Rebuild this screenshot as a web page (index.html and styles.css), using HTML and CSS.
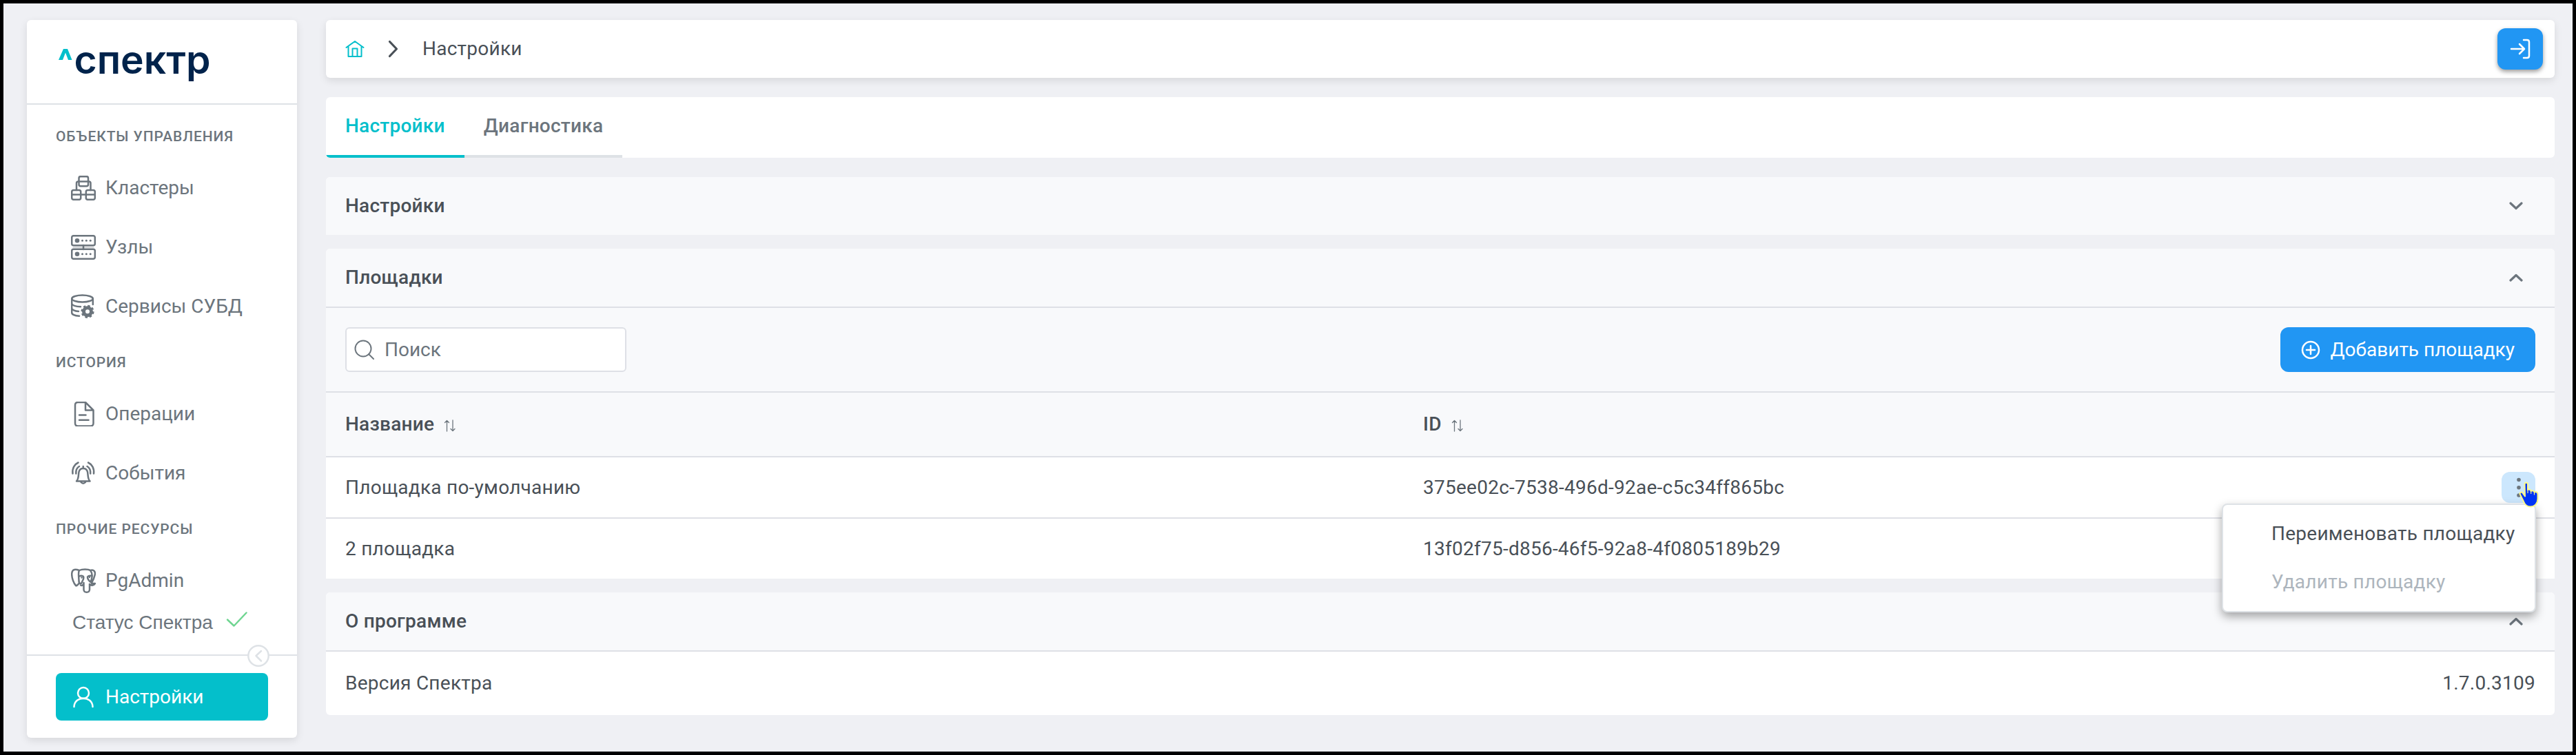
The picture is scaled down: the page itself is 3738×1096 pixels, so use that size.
FILE: index.html
```html
<!DOCTYPE html>
<html lang="ru">
<head>
    <meta charset="UTF-8">
    <meta name="viewport" content="width=device-width, initial-scale=1.0">
    <title>Спектр - Настройки</title>
    <link rel="stylesheet" href="styles.css">
</head>
<body>
    <div class="sidebar">
        <div class="logo">
            <svg width="240" height="90" viewBox="0 0 240 90">
                <path d="M0 37 L7 21 H13 L19.5 37 H14 L10 26.500 L6 37 Z" fill="#04bfcb"/>
                <text x="22.500" y="57" class="logo-text" textLength="198" lengthAdjust="spacingAndGlyphs">спектр</text>
            </svg>
        </div>
        <div class="menu">
            <div class="menu-title">Объекты управления</div>
            <a class="menu-item">
                <svg class="icon" viewBox="0 0 36 36">
                    <rect x="11.500" y="1.200" width="13.500" height="14" rx="2.500"/>
                    <rect x="1.200" y="21" width="13" height="13.800" rx="2.500"/>
                    <rect x="21.800" y="21" width="13" height="13.800" rx="2.500"/>
                    <path d="M11.500 8.500H25M1.200 27.500H34.800M8 21V11Q8 8.500 10.500 8.500H11.500M25 8.500H26Q28.500 8.500 28.500 11V21"/>
                </svg>
                <span>Кластеры</span>
            </a>
            <a class="menu-item">
                <svg class="icon" viewBox="0 0 36 36">
                    <rect x="1.200" y="1.200" width="33.600" height="14" rx="2.500"/>
                    <rect x="1.200" y="20.800" width="33.600" height="14" rx="2.500"/>
                    <path d="M3 18H33" stroke-width="1" opacity="0.5"/>
                    <path d="M18 15V21"/>
                    <g class="fill">
                        <circle cx="9" cy="8.200" r="3.300"/><circle cx="16.500" cy="8.200" r="1.500"/><circle cx="22.300" cy="8.200" r="1.500"/><circle cx="28.200" cy="8.200" r="1.500"/>
                        <circle cx="9" cy="27.800" r="3.300"/><circle cx="16.500" cy="27.800" r="1.500"/><circle cx="22.300" cy="27.800" r="1.500"/><circle cx="28.200" cy="27.800" r="1.500"/>
                    </g>
                </svg>
                <span>Узлы</span>
            </a>
            <a class="menu-item">
                <svg class="icon" viewBox="0 0 36 36">
                    <ellipse cx="16.500" cy="6.500" rx="15.300" ry="5"/>
                    <path d="M1.200 6.500V27C1.200 29.500 6 31.300 12 31.700M31.800 6.500V15M1.200 14C2.500 16.500 8 18 14 18.300M1.200 21C2 23 6 24.500 11 25"/>
                    <circle cx="24" cy="25.300" r="5.500" stroke-width="5"/>
                    <circle class="teeth" cx="24" cy="25.300" r="8.200"/>
                </svg>
                <span>Сервисы СУБД</span>
            </a>

            <div class="menu-title">История</div>
            <a class="menu-item">
                <svg class="icon" viewBox="0 0 36 36">
                    <path d="M21 1H10Q6 1 6 5V31.500Q6 35.500 10 35.500H28.500Q32.500 35.500 32.500 31.500V12.500L21 1V12.500H32.500M12 19.500H21.500M12 26.700H25.500"/>
                </svg>
                <span>Операции</span>
            </a>
            <a class="menu-item">
                <svg class="icon" viewBox="0 0 36 36">
                    <path d="M8 29.500C11.500 26 10.500 21 11.500 16C12.500 12 15 11 17.700 11C20.500 11 23 12 24 16C25 21 24 26 27.500 29.500ZM17.700 11V8M14.500 31Q17.700 34.500 21 31M10.500 2.500C5 5 1.500 11 2.500 18.500M25 2.500C30.500 5 34 11 33 18.500M12 8C8.500 10 7 13.500 7.300 18.500M23.500 8C27 10 28.500 13.500 28.200 18.500"/>
                </svg>
                <span>События</span>
            </a>

            <div class="menu-title">Прочие ресурсы</div>
            <a class="menu-item">
                <svg class="icon" viewBox="0 0 36 36">
                    <path d="M12 3C7 1 1.500 .5 1.200 8C1 14 4 22 7 25C8 26 9.500 24 12 21.500M12 3C16 1 25 1 28 3C33 1 36 5 34.500 10C33.500 14.500 32 18 30 21M12 3C10 6 11.500 12 11.500 19C12 23 15 23 16 20C17 17 20 14 17.500 11.500C15 10 13 11 11.500 12M28 3C32 8 31 13 28.500 20C26 18 24 15 24 12.500C25 11 28 10.500 30.500 11M18.500 21V31C19 36 26.500 36 27 31V23M14 24.500Q17 26 18.500 22M27 23C30 26 33.500 24.500 35 22H30"/>
                    <g class="fill"><circle cx="15.500" cy="13.500" r="1.200"/><circle cx="27" cy="13" r="1.200"/></g>
                </svg>
                <span>PgAdmin</span>
            </a>
            <div class="status">
                <span>Статус Спектра</span>
                <svg class="check" width="32" height="24" viewBox="0 0 32 24"><path d="M2 12.500L11.500 21.500L29.500 2.500"/></svg>
            </div>
        </div>
        <div class="sidebar-footer">
            <div class="collapse">
                <svg width="32" height="32" viewBox="0 0 32 32"><circle cx="16" cy="16" r="14.700" fill="#fff"/><path d="M20 9L12.500 16L20 23.500"/></svg>
            </div>
            <a class="menu-item active">
                <svg class="icon" viewBox="0 0 36 36">
                    <circle cx="18" cy="12" r="8"/>
                    <path d="M4.500 32C5 15.500 31 15.500 31.500 32"/>
                </svg>
                <span>Настройки</span>
            </a>
        </div>
    </div>

    <div class="main">
        <div class="topbar">
            <svg class="home" width="28" height="26" viewBox="0 0 28 26"><path d="M1.500 11L14 2L26.500 11M4.500 9.500V24H23.500V9.500M10.500 24V12.500H17.500V24"/></svg>
            <svg class="separator" width="16" height="26" viewBox="0 0 16 26"><path d="M2.500 2.500L12.500 13L2.500 23.500"/></svg>
            <span>Настройки</span>
            <button class="login-button">
                <svg width="30" height="30" viewBox="0 0 30 30"><path d="M2 15H20.500M14 8L21 15L14 22M20 2H25Q28 2 28 5V25Q28 28 25 28H20"/></svg>
            </button>
        </div>

        <div class="tabs">
            <div class="tab selected">Настройки</div>
            <div class="tab">Диагностика</div>
        </div>

        <div class="panel">
            <div class="panel-header">
                <span>Настройки</span>
                <svg class="chevron" viewBox="0 0 20 12"><path d="M2 2L10 9.500L18 2"/></svg>
            </div>
        </div>

        <div class="panel">
            <div class="panel-header opened">
                <span>Площадки</span>
                <svg class="chevron" viewBox="0 0 20 12"><path d="M2 10L10 2.500L18 10"/></svg>
            </div>
            <div class="toolbar">
                <div class="search">
                    <svg width="30" height="30" viewBox="0 0 30 30"><circle cx="13" cy="13" r="11.500"/><path d="M21 21L28 28"/></svg>
                    <input type="text" placeholder="Поиск">
                </div>
                <button class="add-button">
                    <svg width="28" height="28" viewBox="0 0 28 28"><circle cx="14" cy="14" r="12"/><path d="M14 8V20M8 14H20"/></svg>
                    <span>Добавить площадку</span>
                </button>
            </div>
            <div class="row row-head">
                <div>Название <svg class="sort" viewBox="0 0 18 18"><path d="M4.500 17V1.500M1.500 4.500L4.500 1.500L7.500 4.500M13 1V16.500M10 13.500L13 16.500L16 13.500"/></svg></div>
                <div>ID <svg class="sort" viewBox="0 0 18 18"><path d="M4.500 17V1.500M1.500 4.500L4.500 1.500L7.500 4.500M13 1V16.500M10 13.500L13 16.500L16 13.500"/></svg></div>
            </div>
            <div class="row">
                <div>Площадка по-умолчанию</div>
                <div>375ee02c-7538-496d-92ae-c5c34ff865bc</div>
                <div class="actions">
                    <button class="dots-button">
                        <svg width="6" height="30" viewBox="0 0 6 30"><circle cx="3" cy="3.500" r="2.800"/><circle cx="3" cy="14.700" r="2.800"/><circle cx="3" cy="26" r="2.800"/></svg>
                    </button>
                    <div class="dropdown">
                        <div class="dropdown-item">Переименовать площадку</div>
                        <div class="dropdown-item disabled">Удалить площадку</div>
                    </div>
                    <!-- курсор -->
                    <svg class="cursor" width="32" height="42" viewBox="0 0 32 42">
                        <path d="M8.500 6C8.500 3 13 3 13 6V14C14.500 13 17.500 13.500 17.500 16C19.500 14.500 22.500 15.500 22.500 17.500C25 16.500 27.500 17.500 27.500 20.500V27C27.500 34 23 38.500 17 38.500C11.500 38.500 8.500 35 7 31L2 21C.5 18 4 16.500 5.500 18.500L9 23.500Z" fill="#0035f5" stroke="#fdf98a" stroke-width="2"/>
                        <path d="M13 14V18.500M17.700 16V19.500M22.500 18V21" stroke="#fdf98a" stroke-width="1.200"/>
                    </svg>
                </div>
            </div>
            <div class="row">
                <div>2 площадка</div>
                <div>13f02f75-d856-46f5-92a8-4f0805189b29</div>
            </div>
        </div>

        <div class="panel last">
            <div class="panel-header opened">
                <span>О программе</span>
                <svg class="chevron" viewBox="0 0 20 12"><path d="M2 10L10 2.500L18 10"/></svg>
            </div>
            <div class="version">
                <span>Версия Спектра</span>
                <span>1.7.0.3109</span>
            </div>
        </div>
    </div>
</body>
</html>
```

FILE: styles.css
```css
* {
    box-sizing: border-box;
}
body {
    font-family: Roboto, sans-serif;
    font-size: 28px;
    line-height: 42px;
    letter-spacing: 0.25px;
    color: #495057;
    background-color: #eff0f4;
    margin: 0;
    height: 100vh;
    border: 5px solid #000;
    padding: 24px 26px 20px 34px;
    display: flex;
    gap: 42px;
    overflow: hidden;
}
svg {
    display: block;
    flex-shrink: 0;
    fill: none;
    stroke: currentColor;
    stroke-width: 2.5;
    stroke-linecap: round;
    stroke-linejoin: round;
}
button {
    border: none;
    font: inherit;
    cursor: pointer;
}

/* Боковое меню */
.sidebar {
    width: 392px;
    flex-shrink: 0;
    background-color: white;
    border-radius: 6px;
    box-shadow: 0 4px 12px rgba(0,0,0,0.1);
    color: #6c757d;
    letter-spacing: 0;
    display: flex;
    flex-direction: column;
}
.logo {
    height: 123px;
    border-bottom: 2px solid #dee2e6;
    padding: 21px 0 0 46px;
}
.logo svg {
    stroke: none;
}
.logo-text {
    font-family: Inter, sans-serif;
    font-size: 56px;
    font-weight: 600;
    fill: #00234b;
}
.menu {
    flex-grow: 1;
    padding: 0 42px;
}
.menu-title {
    font-size: 21px;
    font-weight: 500;
    line-height: 32px;
    letter-spacing: 0.9px;
    text-transform: uppercase;
    padding-top: 30px;
    margin-bottom: 16px;
}
.menu-item + .menu-title {
    padding-top: 22px;
}
.menu-item {
    display: flex;
    align-items: center;
    gap: 14px;
    height: 86px;
    padding-left: 22px;
}
.icon {
    width: 36px;
    height: 36px;
}
.icon .fill {
    fill: currentColor;
    stroke: none;
}
.icon .teeth {
    stroke-width: 2.8;
    stroke-linecap: butt;
    stroke-dasharray: 3.4 3.04;
}
.status {
    display: flex;
    gap: 19px;
    padding-left: 24px;
    margin-top: -3px;
    font-family: "Liberation Sans", sans-serif;
}
.check {
    margin-top: 4px;
    color: #6fd591;
}
.sidebar-footer {
    position: relative;
    height: 121px;
    border-top: 2px solid #dee2e6;
    padding: 25px 42px 0;
}
.collapse {
    position: absolute;
    left: 320px;
    top: -16px;
    color: #dee2e6;
}
.active {
    height: 69px;
    background-color: #04bfcb;
    color: white;
    border-radius: 8px;
}

/* Основная часть */
.main {
    flex-grow: 1;
}
.topbar {
    display: flex;
    align-items: center;
    height: 84px;
    margin-bottom: 28px;
    padding: 0 17px 0 28px;
    background-color: white;
    border-radius: 6px;
    box-shadow: 0 4px 12px rgba(0,0,0,0.1);
}
.home {
    color: #04bfcb;
    stroke-width: 2;
}
.separator {
    margin: 0 34px;
    stroke-width: 3.2;
}
.login-button {
    display: flex;
    align-items: center;
    justify-content: center;
    width: 66px;
    height: 60px;
    margin-left: auto;
    background-color: #2196f3;
    color: white;
    border-radius: 12px;
    box-shadow: 0 3px 6px rgba(0,0,0,0.4);
}
.tabs {
    display: flex;
    height: 88px;
    margin-bottom: 28px;
    background-color: white;
    border-radius: 6px;
    overflow: hidden;
}
.tab {
    padding: 21px 28px 0;
    border-bottom: 4px solid #dee2e6;
    color: #6c757d;
    font-weight: 500;
}
.tab.selected {
    border-color: #04bfcb;
    color: #04bfcb;
}
.panel {
    margin-bottom: 20px;
    background-color: white;
    border-radius: 6px 6px 0 0;
}
.panel.last {
    border-radius: 6px;
}
.panel-header {
    display: flex;
    align-items: center;
    justify-content: space-between;
    height: 84px;
    padding: 0 46px 0 28px;
    background-color: #f8f9fb;
    border-radius: 6px 6px 0 0;
    font-weight: 500;
}
.panel-header.opened {
    height: 86px;
    border-bottom: 2px solid #dee0e6;
}
.chevron {
    width: 20px;
    height: 12px;
    color: #6c757d;
    stroke-width: 3.2;
}
.toolbar {
    display: flex;
    align-items: center;
    justify-content: space-between;
    height: 123px;
    padding: 0 28px;
    background-color: #f8f9fb;
    border-bottom: 2px solid #dee0e6;
}
.search {
    display: flex;
    align-items: center;
    gap: 14px;
    width: 408px;
    height: 65px;
    padding-left: 11px;
    background-color: white;
    border: 2px solid #dee0e6;
    border-radius: 6px;
    color: #6c757d;
}
.search svg {
    stroke-width: 2;
}
.search input {
    width: 300px;
    padding: 0;
    border: none;
    font: inherit;
}
.search input::placeholder {
    color: #6c757d;
}
.add-button {
    display: flex;
    align-items: center;
    gap: 14px;
    height: 65px;
    padding: 0 30px;
    background-color: #2196f3;
    color: white;
    border-radius: 12px;
    letter-spacing: 0;
}
.row {
    display: grid;
    grid-template-columns: 1564px 1fr auto;
    align-items: center;
    height: 89px;
    padding: 0 28px;
    border-bottom: 2px solid #dee0e6;
}
.row:last-child {
    height: 87px;
    border-bottom: none;
}
.row-head {
    height: 94px;
    background-color: #f8f9fb;
    font-weight: 500;
}
.row-head div {
    display: flex;
    align-items: center;
    gap: 14px;
}
.sort {
    width: 18px;
    height: 18px;
    margin-top: 3px;
    color: #6c757d;
    stroke-width: 1.3;
}
.actions {
    position: relative;
}
.dots-button {
    display: flex;
    align-items: center;
    justify-content: center;
    width: 49px;
    height: 45px;
    background-color: #cce7fd;
    border-radius: 12px;
}
.dots-button svg {
    fill: #6c757d;
    stroke: none;
}
.dropdown {
    position: absolute;
    right: -1px;
    top: 46px;
    z-index: 1;
    width: 456px;
    height: 158px;
    padding: 8px 0;
    background-color: white;
    border: 2px solid #dee2e6;
    border-radius: 8px;
    box-shadow: 0 6px 14px rgba(0,0,0,0.35);
}
.dropdown-item {
    height: 70px;
    padding: 13px 0 0 70px;
    white-space: nowrap;
}
.dropdown-item.disabled {
    color: #adb5bd;
}
.cursor {
    position: absolute;
    left: 25px;
    top: 12px;
    z-index: 2;
}
.version {
    display: flex;
    align-items: center;
    justify-content: space-between;
    height: 92px;
    padding: 0 28px;
}
```
